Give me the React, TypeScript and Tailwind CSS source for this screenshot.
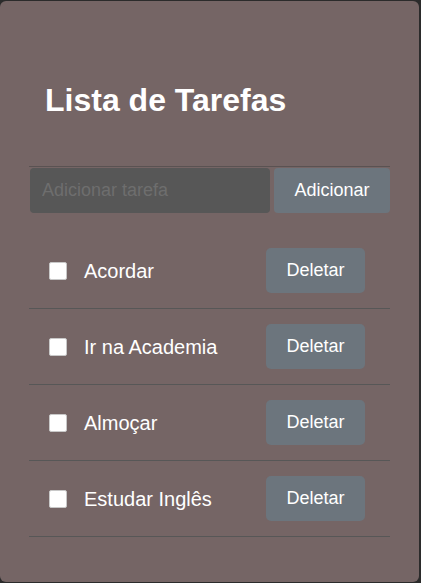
import React, { useState } from 'react';

const initial = ['Acordar', 'Ir na Academia', 'Almoçar', 'Estudar Inglês'];

export default function App() {
  const [tasks, setTasks] = useState<string[]>(initial);
  const [text, setText] = useState('');

  const add = () => {
    if (!text.trim()) return;
    setTasks([...tasks, text.trim()]);
    setText('');
  };

  return (
    <div className="min-h-screen bg-[#2b2b2b] pt-px font-['Liberation_Sans',Arial,sans-serif]">
      <div className="w-[419px] h-[581px] rounded-md bg-[#756565] px-[29px] pt-[81px]">
        <h1 className="pl-4 text-[32px] leading-[37px] font-bold text-white">Lista de Tarefas</h1>

        {/* Form */}
        <div className="mt-[47px] border-t border-[#5a5252] pt-px flex gap-1">
          <input
            value={text}
            onChange={(e) => setText(e.target.value)}
            placeholder="Adicionar tarefa"
            className="ml-px w-[240px] min-w-0 h-[45px] rounded-[4px] bg-[#575757] px-3 text-[18px] text-white placeholder:text-[#6e6e6e] outline-none"
          />
          <button
            onClick={add}
            className="w-[116px] h-[45px] rounded-[4px] bg-[#6c757d] text-[18px] text-white"
          >
            Adicionar
          </button>
        </div>

        {/* Tasks */}
        <ul className="mt-5">
          {tasks.map((t, i) => (
            <li key={i} className="flex items-center py-[15px] pl-5 pr-[25px] border-b border-[#575757]">
              <input
                type="checkbox"
                className="appearance-none w-[18px] h-[18px] bg-white border border-[#c8c8c8] rounded-[2px] checked:bg-[#0075ff]"
              />
              <span className="ml-[17px] flex-1 text-[20px] text-white">{t}</span>
              <button
                onClick={() => setTasks(tasks.filter((_, j) => j !== i))}
                className="w-[99px] h-[45px] rounded-[5px] bg-[#6c757d] text-[18px] text-white"
              >
                Deletar
              </button>
            </li>
          ))}
        </ul>
      </div>
    </div>
  );
}
